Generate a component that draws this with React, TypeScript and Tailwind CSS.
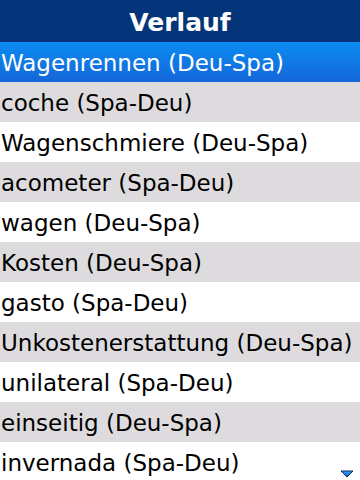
const items = [
  "Wagenrennen (Deu-Spa)",
  "coche (Spa-Deu)",
  "Wagenschmiere (Deu-Spa)",
  "acometer (Spa-Deu)",
  "wagen (Deu-Spa)",
  "Kosten (Deu-Spa)",
  "gasto (Spa-Deu)",
  "Unkostenerstattung (Deu-Spa)",
  "unilateral (Spa-Deu)",
  "einseitig (Deu-Spa)",
  "invernada (Spa-Deu)",
];

export default function App() {
  return (
    <div className="relative w-[360px] h-[480px] overflow-hidden bg-white font-['DejaVu_Sans',sans-serif]">
      {/* title bar */}
      <div className="h-[42px] pt-[3px] bg-[#04357a] flex items-center justify-center">
        <span className="text-white text-[25px] font-bold leading-none">Verlauf</span>
      </div>

      {/* history list */}
      <div className="flex flex-col">
        {items.map((item, i) => {
          const selected = i === 0;
          const rowBg = selected
            ? "bg-gradient-to-b from-[#0a8cf2] to-[#1566d8] text-white"
            : i % 2 === 1
            ? "bg-[#dddbde] text-black"
            : "bg-white text-black";
          return (
            <div
              key={i}
              className={`h-10 shrink-0 flex items-center pt-[2px] pl-[1px] text-[23px] leading-none whitespace-nowrap ${rowBg}`}
            >
              {item}
            </div>
          );
        })}
      </div>

      {/* scroll-down hint */}
      <svg
        className="absolute left-[340px] top-[470px]"
        width="14"
        height="8"
        viewBox="0 0 14 8"
      >
        <defs>
          <linearGradient id="tri" x1="0" y1="0" x2="0" y2="1">
            <stop offset="0" stopColor="#3aa0ff" />
            <stop offset="1" stopColor="#0a5fd0" />
          </linearGradient>
        </defs>
        <polygon points="1,1 13,1 7,7" fill="url(#tri)" stroke="#0b2a5c" strokeWidth="1" />
      </svg>
    </div>
  );
}
